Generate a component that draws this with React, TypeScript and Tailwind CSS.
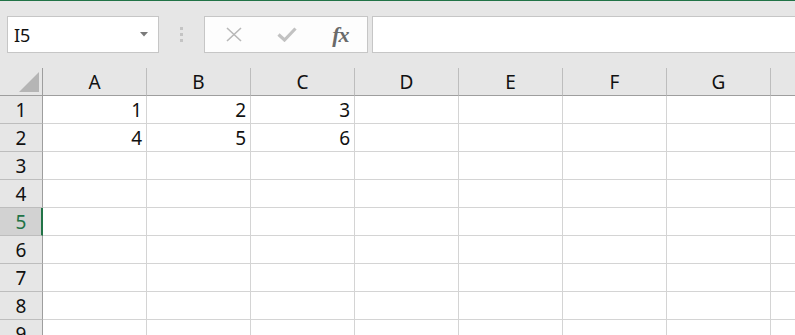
import React from "react";

const cols = ["A", "B", "C", "D", "E", "F", "G"];
const data: Record<number, (number | null)[]> = {
  1: [1, 2, 3],
  2: [4, 5, 6],
};

export default function App() {
  const rows = [1, 2, 3, 4, 5, 6, 7, 8, 9];
  return (
    <div
      className="w-[795px] h-[335px] overflow-hidden bg-[#e6e6e6] text-[#111]"
      style={{ fontFamily: '"Noto Sans", "Liberation Sans", sans-serif' }}
    >
      <div className="h-px bg-[#217346]" />
      {/* toolbar */}
      <div className="flex items-start pt-[15px] h-[67px]">
        <div className="ml-[7px] w-[152px] h-[37px] bg-white border border-[#c6c6c6] flex items-center justify-between pl-[6px] pr-[10px]">
          <span className="text-[18px] leading-none mt-[1px]">I5</span>
          <svg width="8" height="5" viewBox="0 0 8 5">
            <path d="M0 0 L8 0 L4 4.5 Z" fill="#7a7a7a" />
          </svg>
        </div>
        <div className="w-[45px] h-[37px] flex flex-col items-center justify-center gap-[3px]">
          <div className="w-[3px] h-[3px] bg-[#c4c4c4]" />
          <div className="w-[3px] h-[3px] bg-[#c4c4c4]" />
          <div className="w-[3px] h-[3px] bg-[#c4c4c4]" />
        </div>
        <div className="w-[164px] h-[37px] bg-[#fdfdfd] border border-[#c6c6c6] flex items-center">
          <div className="w-[54px] flex justify-center ml-[2px]">
            <svg width="16" height="15" viewBox="0 0 16 15">
              <path d="M1 1 L15 14 M15 1 L1 14" stroke="#b8b8b8" strokeWidth="1.6" fill="none" />
            </svg>
          </div>
          <div className="w-[54px] flex justify-center">
            <svg width="20" height="15" viewBox="0 0 20 15">
              <path d="M1.5 7.5 L7.5 13 L18.5 1.5" stroke="#c2c2c2" strokeWidth="3.2" fill="none" />
            </svg>
          </div>
          <div className="w-[54px] flex justify-center">
            <span
              className="italic text-[22px] leading-none text-[#6a6a6a] font-bold tracking-[-1px]"
              style={{ fontFamily: '"Liberation Serif", "DejaVu Serif", serif' }}
            >
              fx
            </span>
          </div>
        </div>
        <div className="ml-[4px] flex-1 h-[37px] bg-white border border-[#c6c6c6] border-r-0" />
      </div>
      {/* grid */}
      <div
        className="grid"
        style={{ gridTemplateColumns: "43px repeat(7, 104px) 1fr" }}
      >
        {/* header row */}
        <div className="h-[28px] bg-[#e6e6e6] border-r border-b border-[#9e9e9e] flex items-end justify-end pr-[3px] pb-[3px]">
          <svg width="20" height="20" viewBox="0 0 20 20">
            <path d="M20 0 L20 20 L0 20 Z" fill="#b5b5b5" />
          </svg>
        </div>
        {cols.map((c) => (
          <div
            key={c}
            className="h-[28px] bg-[#e6e6e6] border-r border-r-[#bdbdbd] border-b border-b-[#9e9e9e] flex items-end justify-center pb-[1px] text-[19px] leading-[24px]"
          >
            {c}
          </div>
        ))}
        <div className="h-[28px] bg-[#e6e6e6] border-b border-[#9e9e9e]" />
        {rows.map((r) => {
          const sel = r === 5;
          return (
            <React.Fragment key={r}>
              <div
                className={
                  sel
                    ? "h-[28px] bg-[#d2d2d2] border-r-2 border-r-[#217346] border-b border-b-[#bdbdbd] flex items-end justify-center pb-[1px] pl-[1px] text-[19px] leading-[24px] text-[#217346]"
                    : "h-[28px] bg-[#e6e6e6] border-r border-r-[#9e9e9e] border-b border-b-[#bdbdbd] flex items-end justify-center pb-[1px] text-[19px] leading-[24px]"
                }
              >
                {r}
              </div>
              {cols.map((c, i) => {
                const v = data[r]?.[i];
                return (
                  <div
                    key={c}
                    className="h-[28px] bg-white border-r border-b border-[#d4d4d4] flex items-end justify-end pr-[4px] pb-[1px] text-[19px] leading-[24px]"
                  >
                    {v ?? ""}
                  </div>
                );
              })}
              <div className="h-[28px] bg-white border-b border-[#d4d4d4]" />
            </React.Fragment>
          );
        })}
      </div>
    </div>
  );
}
